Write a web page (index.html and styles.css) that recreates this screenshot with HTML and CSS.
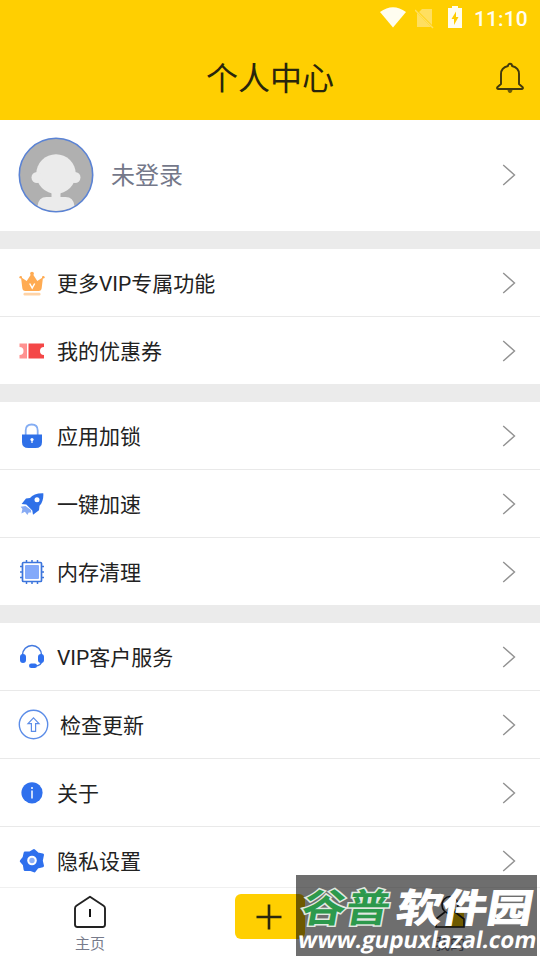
FILE: index.html
```html
<!DOCTYPE html>
<html lang="zh-CN">
<head>
<meta charset="utf-8">
<title>个人中心</title>
<link rel="stylesheet" href="styles.css">
</head>
<body>
<svg class="defs" width="0" height="0"><defs>
<symbol id="arrow" viewBox="0 0 14 22"><path d="M1.2 1 12.500 11 1.2 21" fill="none" stroke="#929292" stroke-width="1.4"/></symbol>
</defs></svg>
<div class="app">
<header class="header">
  <div class="status">
    <svg class="wifi" width="26" height="21" viewBox="0 0 26 21"><path d="M0 5Q13-4.500 26 5L13 20.500Z" fill="#fffdf0"/></svg>
    <svg class="sim" width="20" height="21" viewBox="0 0 20 21"><path d="M7 1h10v16L4 4ZM2 5l14 14H2Z" fill="#ffdf60"/><path d="m0 2 18 18" stroke="#ffdf60" stroke-width="1.5"/></svg>
    <svg class="battery" width="14" height="22" viewBox="0 0 14 22"><path d="M4 0h6v2h4v20H0V2h4Z" fill="#fffdf0"/><path d="M8 5.500 3.500 13H6v6l4.500-8H8Z" fill="#fc0"/></svg>
    <span class="clock">11:10</span>
  </div>
  <div class="titlebar">
    <h1>个人中心</h1>
    <svg class="bell" width="30" height="32" viewBox="0 0 30 32"><path d="M6 22V12c0-4 3-7 7-8 0-3 4-3 4 0 4 1 7 4 7 8v10l3.400 3c1 1 .5 2-.8 2H3.400c-1.300 0-1.800-1-.8-2Z" fill="none" stroke="#42390d" stroke-width="1.900" stroke-linejoin="round"/><path d="M12.500 28h5q-.5 3-2.500 3t-2.500-3" fill="#6d5b08"/></svg>
  </div>
</header>
<main>
  <section class="profile">
    <svg class="avatar" width="76" height="76" viewBox="0 0 76 76"><defs><clipPath id="face"><circle cx="38" cy="38" r="36"/></clipPath></defs><circle cx="38" cy="38" r="36.700" fill="#b0b0b0" stroke="#5b83d4" stroke-width="1.600"/><g fill="#ebebeb" clip-path="url(#face)"><circle cx="38" cy="37" r="19.800"/><circle cx="19" cy="40.500" r="5.500"/><circle cx="57" cy="40.500" r="5.500"/><path d="M33.500 54h9v6h5q8 0 9 9v8h-37v-8q1-9 9-9h5Z"/></g></svg>
    <span class="login">未登录</span>
    <svg class="arrow"><use href="#arrow"/></svg>
  </section>
  <section class="group">
    <div class="row"><svg class="icon" viewBox="0 0 28 28"><path d="M3 8.200 8.700 12 13.300 5h1.400l4.600 7L25 8.200 23.700 19q-.3 3-3 3H7.300q-2.700 0-3-3Z" fill="#ffab52"/><g fill="#ffab52"><circle cx="14" cy="4.600" r="1.900"/><circle cx="2.700" cy="8.200" r="1.300"/><circle cx="25.300" cy="8.200" r="1.300"/></g><rect x="5.500" y="23.700" width="17" height="2.700" rx="1.200" fill="#ffd3a6"/><path d="m11.700 14.500 2.500 4.500 2.500-4.500" fill="none" stroke="#fff" stroke-width="1.500"/></svg><span class="label">更多VIP专属功能</span><svg class="arrow"><use href="#arrow"/></svg></div>
    <div class="row"><svg class="icon" viewBox="0 0 28 28"><path d="M1.500 6.500H9V21.500H1.500V18a4 4 0 0 0 0-8Z" fill="#ff9190"/><path d="M10.500 6.500H26V10a4 4 0 0 0 0 8v3.500H10.500Z" fill="#f44747"/></svg><span class="label">我的优惠券</span><svg class="arrow"><use href="#arrow"/></svg></div>
  </section>
  <section class="group">
    <div class="row"><svg class="icon" viewBox="0 0 28 28"><path d="M7.700 13V8.500q0-6 6-6t6 6V13" fill="none" stroke="#84adf3" stroke-width="1.800"/><path d="M4 12.500h20V20q0 6-6.500 6h-7Q4 26 4 20Z" fill="#2f70e8"/><circle cx="14" cy="17.500" r="1.600" fill="#fff"/><path d="M13.400 17h1.200v4h-1.200Z" fill="#fff"/></svg><span class="label">应用加锁</span><svg class="arrow"><use href="#arrow"/></svg></div>
    <div class="row"><svg class="icon" viewBox="0 0 28 28"><path d="M25.300 3.200C19 3 14.500 5 12 8L8 8.600 3.600 14l4.700.5 6 6 .7 4.200 6-4.500.5-4.500C24.500 13 25.700 8 25.300 3.200Z" fill="#2f70e8"/><circle cx="19" cy="9.700" r="2.500" fill="#fff"/><path d="m7.500 16-4.800.7 1.700 2.300-1 4.500 3.500-1.800 2.500 3.200 1.300-2.400h2.500L13 20Z" fill="#88abf4"/></svg><span class="label">一键加速</span><svg class="arrow"><use href="#arrow"/></svg></div>
    <div class="row"><svg class="icon" viewBox="0 0 28 28"><path d="M8.500 2v3M14 2v3M19.500 2v3M8.500 23v3M14 23v3M19.500 23v3M2 8.500h3M2 14h3M2 19.500h3M23 8.500h3M23 14h3M23 19.500h3" stroke="#3c75dc" stroke-width="1.500"/><rect x="4.500" y="4.500" width="19" height="19" rx="1" fill="#fff" stroke="#3c75dc" stroke-width="1.700"/><rect x="7" y="7" width="14" height="14" rx="1" fill="#83a9fa"/></svg><span class="label">内存清理</span><svg class="arrow"><use href="#arrow"/></svg></div>
  </section>
  <section class="group">
    <div class="row"><svg class="icon" viewBox="0 0 28 28"><path d="M4.500 13v-1a9.500 9.500 0 0 1 19 0v1M24 17q-.5 6-7 6" fill="none" stroke="#4379df" stroke-width="1.500"/><rect x="2" y="11" width="6" height="9" rx="3" fill="#2f70ef"/><rect x="20" y="11" width="6" height="9" rx="3" fill="#2f70ef"/><rect x="11" y="20.500" width="8" height="4.500" rx="2.200" fill="#2f70ef"/></svg><span class="label">VIP客户服务</span><svg class="arrow"><use href="#arrow"/></svg></div>
    <div class="row update"><svg class="icon" viewBox="0 0 31 31"><circle cx="15.500" cy="15.500" r="14.200" fill="none" stroke="#5c8de8" stroke-width="1.400"/><path d="m15.500 8.800 5.500 5.800h-3.400v7.700h-4.200v-7.700H10Z" fill="none" stroke="#5c8de8" stroke-width="1.200"/></svg><span class="label">检查更新</span><svg class="arrow"><use href="#arrow"/></svg></div>
    <div class="row"><svg class="icon" viewBox="0 0 28 28"><circle cx="14" cy="13.800" r="10.600" fill="#2f70ed"/><circle cx="14" cy="9" r="1" fill="#fff"/><path d="M14 11.500v8" stroke="#fff" stroke-width="1.500"/></svg><span class="label">关于</span><svg class="arrow"><use href="#arrow"/></svg></div>
    <div class="row"><svg class="icon" viewBox="0 0 28 28"><path d="M7 6h4.800L16 3.500l3.600 3.300 5 1-1.200 6 1.200 5-5.300 1.400-2.900 3.800-4.200-1.600L7 22.500l-.8-5-3-3.500L6 10.500Z" fill="#2f70ed" stroke="#2f70ed" stroke-width="2.800" stroke-linejoin="round"/><circle cx="14" cy="13.500" r="4.800" fill="#fff"/><circle cx="14" cy="13.500" r="2.700" fill="#8baff7"/></svg><span class="label">隐私设置</span><svg class="arrow"><use href="#arrow"/></svg></div>
  </section>
</main>
<nav class="nav">
  <div class="tab"><svg width="34" height="34" viewBox="0 0 34 34"><path d="m17 1.800 13.600 9q1.400 1 1.400 2.700v16Q32 32 29.500 32h-25Q2 32 2 29.500v-16q0-1.700 1.400-2.700Z" fill="none" stroke="#222" stroke-width="1.900" stroke-linejoin="round"/><path d="M17 14v8" stroke="#111" stroke-width="2"/></svg><span>主页</span></div>
  <div class="tab"><div class="add"><svg width="26" height="26" viewBox="0 0 26 26"><path d="M13 .5v25M.5 13h25" stroke="#2b270e" stroke-width="2.600"/></svg></div></div>
  <div class="tab"><svg width="34" height="34" viewBox="0 0 34 34"><path d="M16 14h15v18H13Z" fill="#ffd000"/><ellipse cx="17" cy="10" rx="8" ry="8.500" fill="none" stroke="#222" stroke-width="1.600"/><path d="M12 17 3 24v8h28v-8l-9-7" fill="none" stroke="#222" stroke-width="1.600"/></svg><span>我的</span></div>
</nav>
<div class="watermark"><svg width="241" height="81" viewBox="0 0 241 81">
  <g class="brand" transform="translate(9 0) skewX(-10)"><text x="3" y="47" class="green" textLength="88" lengthAdjust="spacingAndGlyphs">谷普</text><text x="98" y="47" class="white" textLength="136" lengthAdjust="spacingAndGlyphs">软件园</text></g>
  <g transform="translate(13 0) skewX(-10)"><text x="1" y="73" class="url" textLength="238" lengthAdjust="spacingAndGlyphs">www.gupuxlazal.com</text></g>
</svg></div>
</div>
</body>
</html>
```
FILE: styles.css
```css
* { box-sizing: border-box; }
body { margin: 0; background: #fff; font-family: Roboto, "Noto Sans CJK SC", sans-serif; color: #222; }
svg { display: block; flex: none; }
.defs { position: absolute; }
.app { position: relative; width: 540px; height: 960px; overflow: hidden; display: flex; flex-direction: column; }
.header { height: 120px; flex: none; background: #ffcf01; }
.status { height: 36px; display: flex; align-items: flex-start; justify-content: flex-end; padding: 7px 13px 0 0; }
.sim { margin: 1px 13px 0 9px; }
.battery { margin-top: -1px; }
.clock { margin-left: 12px; width: 53px; font-size: 21px; line-height: 24px; font-weight: 500; letter-spacing: .1px; color: #fffdf0; white-space: nowrap; }
.titlebar { height: 84px; display: grid; grid-template-columns: 60px 1fr 60px; align-items: center; }
h1 { grid-column: 2; margin: 0; padding-top: 2px; text-align: center; font-size: 32px; line-height: 48px; font-weight: 400; color: #29250c; }
.bell { margin-left: 14.5px; }
main { flex: 1; min-height: 0; overflow: hidden; background: #ebebeb; display: flex; flex-direction: column; gap: 18px; }
.profile { height: 111px; flex: none; display: flex; align-items: center; padding: 0 24px 1px 17.5px; background: #fff; }
.login { margin-left: 17.5px; padding-top: 2px; font-size: 24px; line-height: 36px; color: #74788a; }
.arrow { width: 14px; height: 22px; margin-left: auto; }
.group { flex: none; background: #fff; }
.row { height: 68px; display: flex; align-items: center; padding: 0 24px 0 17.5px; border-bottom: 1px solid #e9e9e9; }
.row:last-child { height: 67px; border-bottom: 0; }
.icon { width: 28px; height: 28px; }
.label { margin-left: 11.5px; font-size: 21px; line-height: 32px; padding-top: 3px; color: #222; }
.update .icon { width: 31px; height: 31px; }
.nav { height: 73px; flex: none; display: grid; grid-template-columns: repeat(3, 1fr); border-top: 1px solid #f0f0f0; background: #fff; }
.tab { display: flex; flex-direction: column; align-items: center; padding-top: 7px; font-size: 15px; line-height: 22px; color: #777b8b; }
.tab span { margin-top: 4px; }
.add { width: 70px; height: 45px; margin-top: -1px; border-radius: 6px; background: #ffcf01; display: flex; align-items: center; justify-content: center; padding-right: 2px; }
.watermark { position: absolute; left: 296px; top: 875px; width: 241px; height: 81px; background: rgba(0, 0, 0, .57); overflow: hidden; }
.brand { font-family: "Noto Sans CJK SC", sans-serif; font-size: 39px; font-weight: 700; }
.green { fill: #2c994c; stroke: #e2e9e2; stroke-width: 3px; paint-order: stroke; }
.white { fill: #fff; stroke: #fff; stroke-width: 1px; }
.url { font-family: "Open Sans", sans-serif; font-size: 23px; font-weight: 700; fill: #fff; }
```
